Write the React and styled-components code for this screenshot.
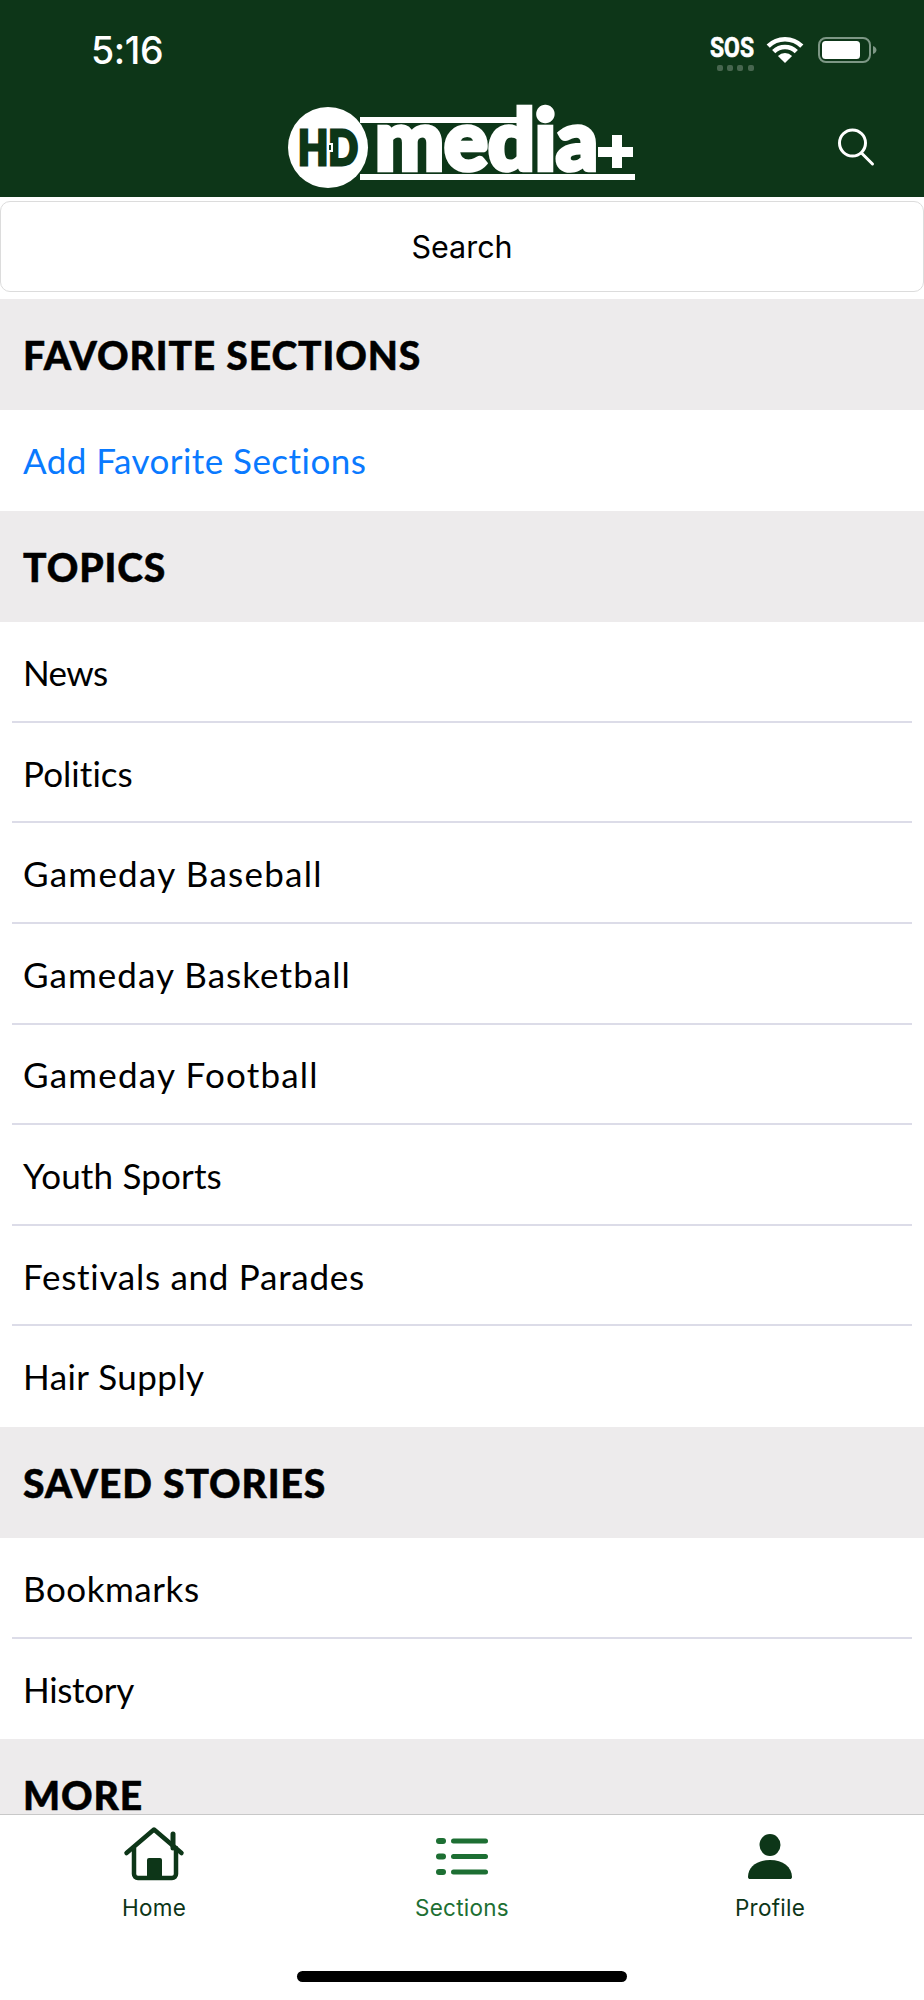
import React from 'react';
import styled, { createGlobalStyle } from 'styled-components';

const Global = createGlobalStyle`
  html, body { margin: 0; padding: 0; background: #fff; }
  * { box-sizing: border-box; }
`;
const Screen = styled.div`
  width: 924px; height: 2000px; display: flex; flex-direction: column; overflow: hidden;
  background: #fff; font-family: Lato, "Liberation Sans", sans-serif; color: #000;
`;
const Header = styled.header`
  flex: 0 0 197px; background: #0d3618; display: flex; flex-direction: column; position: relative;
`;
const StatusBar = styled.div`
  height: 83px; display: flex; justify-content: space-between; align-items: flex-start; padding: 31px 44px 0 91px;
`;
const Time = styled.div`
  font: 500 37.5px/40px Inter, sans-serif; color: #fff; letter-spacing: -0.4px;
`;
const NavBar = styled.div`
  display: flex; padding-left: 288px; position: relative; line-height: 0;
`;
const SearchButton = styled.div`
  position: absolute; left: 836px; top: 42px; line-height: 0;
`;
const Body = styled.main`
  flex: 1; min-height: 0; overflow: hidden; display: flex; flex-direction: column;
`;
const SearchWrap = styled.div`
  flex: 0 0 102px; padding: 4px 0 7px;
`;
const SearchBox = styled.div`
  height: 91px; border: 1.5px solid #dcdcdc; border-radius: 10px;
  display: flex; align-items: center; justify-content: center;
  font: 400 30.5px Inter, sans-serif;
`;
const SectionHeader = styled.div`
  flex: 0 0 111.3px; background: #edebec; display: flex; align-items: center; padding-left: 23px;
  font-weight: 900; font-size: 39px; letter-spacing: 0.9px; -webkit-text-stroke: 0.5px #000;
`;
const Row = styled.div`
  flex: 0 0 100.6px; display: flex; align-items: center; padding: 0 0 1px 23px; font-size: 35px; font-weight: 400;
  position: relative; color: ${p => p.$link ? '#0a7aff' : '#000'};
  letter-spacing: ${p => p.$spacing || 0}px;
  ${p => p.$divider ? `&::after { content: ""; position: absolute; left: 12px; right: 12px; bottom: 0; height: 2px; background: #dcdce8; }` : ''}
`;
const TabBar = styled.nav`
  flex: 0 0 186px; border-top: 1.5px solid #c8c8c8; background: #fff; display: grid;
  grid-template-columns: repeat(3, 1fr); grid-template-rows: 140px 1fr;
`;
const Tab = styled.div`
  display: flex; flex-direction: column; align-items: center; color: ${p => p.$active ? '#1d6f33' : '#0d3618'};
  font: 400 22.5px/28px Inter, sans-serif; letter-spacing: 0.25px;
`;
const TabIcon = styled.div`
  height: 56px; display: flex; align-items: center; justify-content: center; margin-top: 11px; margin-bottom: 12px; line-height: 0;
`;
const HomeIndicator = styled.div`
  grid-column: 1 / -1; justify-self: center; width: 330px; height: 11px; border-radius: 6px; background: #000; margin-top: 16px;
`;

const Logo = () => (
  <svg width="350" height="106" viewBox="0 -24 350 106">
    <rect x="72" y="10" width="157" height="6" fill="#fff" />
    <rect x="72" y="67" width="275" height="6" fill="#fff" />
    <ellipse cx="40" cy="40.5" rx="40" ry="40.5" fill="#fff" />
    <text x="10" y="58" fontFamily="Lato" fontWeight="900" fontSize="48" fill="#0d3618" stroke="#0d3618" strokeWidth="3" textLength="60" lengthAdjust="spacingAndGlyphs">HD</text>
    <rect x="39" y="36" width="6" height="9" fill="#fff" />
    <rect x="41" y="38" width="2" height="5" fill="#0d3618" />
    <text x="87" y="62.5" fontFamily="Lato" fontWeight="900" fontSize="84" fill="#fff" stroke="#fff" strokeWidth="4.500" textLength="223" lengthAdjust="spacingAndGlyphs">media</text>
    <path d="M310 40h35v10h-35zM324 28h10v33h-10z" fill="#fff" />
  </svg>
);
const SearchIcon = () => (
  <svg width="40" height="44" viewBox="0 0 40 44" fill="none" stroke="#fff" strokeWidth="3" strokeLinecap="round">
    <circle cx="16.5" cy="18" r="13" />
    <path d="M25.500 28l11 11" />
  </svg>
);
const StatusIcons = () => (
  <svg width="170" height="42" viewBox="0 0 170 42">
    <text x="0" y="26" fontFamily="Roboto" fontWeight="700" fontSize="28" fill="#fff" stroke="#fff" strokeWidth="0.6" textLength="44" lengthAdjust="spacingAndGlyphs">SOS</text>
    {[7, 17, 27, 38].map(x => <rect key={x} x={x} y="34" width="6" height="6" rx="2" fill="#47664f" />)}
    <path d="M58.200 15.200A23.700 23.700 0 0 1 91.800 15.200" fill="none" stroke="#fff" strokeWidth="4.500" />
    <path d="M63.700 20.700A16 16 0 0 1 86.300 20.700" fill="none" stroke="#fff" strokeWidth="4.500" />
    <path d="M75 32L67.930 24.930A10 10 0 0 1 82.070 24.930Z" fill="#fff" />
    <rect x="109" y="7" width="51" height="24" rx="7" fill="none" stroke="#7d9785" strokeWidth="2" />
    <rect x="112" y="10" width="38" height="18" rx="3.500" fill="#fff" />
    <path d="M163 15c2.500 1 3.500 2.500 3.500 4s-1 3-3.500 4z" fill="#7d9785" />
  </svg>
);
const HomeIcon = () => (
  <svg width="62" height="56" viewBox="0 0 62 56">
    <g fill="none" stroke="#0d3618" strokeWidth="4.500" strokeLinecap="round" strokeLinejoin="round">
      <path d="M3.500 27L31 3.500 58.500 27" />
      <path d="M11 22V48a4 4 0 0 0 4 4H49a4 4 0 0 0 4-4V22" />
      <path d="M50 8V22" strokeWidth="5" />
    </g>
    <rect x="24" y="32" width="15" height="21" rx="2" fill="#0d3618" />
  </svg>
);
const SectionsIcon = () => (
  <svg width="52" height="44" viewBox="0 -6 52 44" fill="#1d6f33">
    {[3, 18.5, 34].map(y => (
      <React.Fragment key={y}>
        <rect x="0" y={y - 3} width="10" height="6" rx="3" />
        <rect x="15" y={y - 2.5} width="37" height="5" rx="2.500" />
      </React.Fragment>
    ))}
  </svg>
);
const ProfileIcon = () => (
  <svg width="44" height="52" viewBox="0 -6 44 52" fill="#0d3618">
    <ellipse cx="22" cy="11" rx="10.500" ry="11" />
    <path d="M0 43C0 33 9 26 22 26s22 7 22 17c0 1.500-1 2-2 2H2c-1 0-2-.500-2-2z" />
  </svg>
);

const topics = [
  ['News', -0.6], ['Politics', 0.05], ['Gameday Baseball', 1.25], ['Gameday Basketball', 1.05],
  ['Gameday Football', 1.2], ['Youth Sports', 0.17], ['Festivals and Parades', 0.72], ['Hair Supply', 0.45],
];

export default function App() {
  return (
    <Screen>
      <Global />
      <Header>
        <StatusBar>
          <Time>5:16</Time>
          <StatusIcons />
        </StatusBar>
        <NavBar>
          <Logo />
          <SearchButton><SearchIcon /></SearchButton>
        </NavBar>
      </Header>
      <Body>
        <SearchWrap><SearchBox>Search</SearchBox></SearchWrap>
        <SectionHeader>FAVORITE SECTIONS</SectionHeader>
        <Row $link $spacing={0.45}>Add Favorite Sections</Row>
        <SectionHeader>TOPICS</SectionHeader>
        {topics.map(([t, s], i) => <Row key={t} $spacing={s} $divider={i < topics.length - 1}>{t}</Row>)}
        <SectionHeader>SAVED STORIES</SectionHeader>
        <Row $divider $spacing={0.55}>Bookmarks</Row>
        <Row $spacing={-0.3}>History</Row>
        <SectionHeader>MORE</SectionHeader>
      </Body>
      <TabBar>
        <Tab><TabIcon><HomeIcon /></TabIcon>Home</Tab>
        <Tab $active><TabIcon><SectionsIcon /></TabIcon>Sections</Tab>
        <Tab><TabIcon><ProfileIcon /></TabIcon>Profile</Tab>
        <HomeIndicator />
      </TabBar>
    </Screen>
  );
}
